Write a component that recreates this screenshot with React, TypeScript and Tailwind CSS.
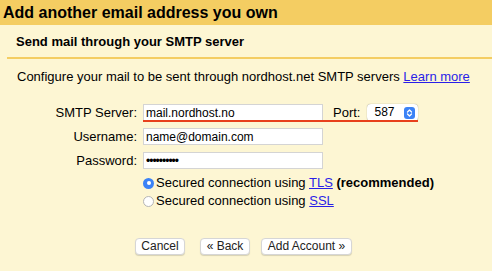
import React from "react";

const Radio: React.FC<{ checked?: boolean }> = ({ checked }) => {
  return checked ? (
    <span className="w-[11px] h-[11px] rounded-full bg-[#3b82f6] flex items-center justify-center shrink-0">
      <span className="w-[4px] h-[4px] rounded-full bg-white" />
    </span>
  ) : (
    <span className="w-[11px] h-[11px] rounded-full bg-white border border-[#b5b5b5] shrink-0" />
  );
};

const Button: React.FC<{ label: string; className: string }> = ({ label, className }) => {
  return (
    <button
      className={`h-[17px] bg-white rounded-[4px] border border-[#d6d6d6] shadow-[0_1px_1px_rgba(0,0,0,0.15)] text-[12px] leading-[15px] text-[#222] ${className}`}
    >
      {label}
    </button>
  );
};

const App: React.FC = () => {
  const inputClass =
    "h-[17px] w-[180px] bg-white border border-[#d4d4d4] px-[2px] text-[12px] leading-[15px] text-black outline-none";
  return (
    <div className="w-[492px] h-[271px] bg-[#fdf6d3] font-['Liberation_Sans',Arial,sans-serif] text-black overflow-hidden">
      <div className="h-[25px] bg-[#f4cd62] pl-[3px] text-[16px] leading-[25px] font-bold">
        Add another email address you own
      </div>
      <div className="mt-[9px] pl-[16px] text-[13px] leading-[15px] font-bold">
        Send mail through your SMTP server
      </div>
      <div className="mt-[8px] ml-[7px] h-[2px] bg-[#f4cd62]" />
      <div className="mt-[10px] pl-[17px] text-[13px] leading-[15px]">
        Configure your mail to be sent through nordhost.net SMTP servers{" "}
        <a className="text-[#2a1ee8] underline">Learn more</a>
      </div>

      <div className="mt-[20px] flex flex-col gap-[7px] text-[13px] leading-[17px]">
        <div className="flex items-center gap-[6px] h-[17px]">
          <div className="w-[137px] text-right">SMTP Server:</div>
          <div className="relative flex items-center">
            <input className={inputClass} defaultValue="mail.nordhost.no" />
            <span className="ml-[10px]">Port:</span>
            <div className="ml-[7px] h-[17px] w-[51px] bg-white rounded-[4px] shadow-[0_0_1px_rgba(0,0,0,0.5)] flex items-center justify-between pl-[7px] pr-[3px] text-[12px]">
              <span>587</span>
              <span className="w-[11px] h-[12px] rounded-[3px] bg-[#3b82f6] flex items-center justify-center">
                <svg width="7" height="10" viewBox="0 0 7 10" fill="none" stroke="white" strokeWidth="1.3" strokeLinecap="round" strokeLinejoin="round">
                  <path d="M1.5 4 L3.5 2 L5.5 4" />
                  <path d="M1.5 6 L3.5 8 L5.5 6" />
                </svg>
              </span>
            </div>
            <span className="absolute left-0 right-0 bottom-[-1px] h-[2px] bg-[#e8401c]" />
          </div>
        </div>
        <div className="flex items-center gap-[6px] h-[17px]">
          <div className="w-[137px] text-right">Username:</div>
          <input className={inputClass} defaultValue="name@domain.com" />
        </div>
        <div className="flex items-center gap-[6px] h-[17px]">
          <div className="w-[137px] text-right">Password:</div>
          <input className={`${inputClass} text-[10px] tracking-[-1px]`} type="password" defaultValue="abcdefghij" />
        </div>
      </div>

      <div className="mt-[5px] pl-[143px] flex flex-col text-[13px] leading-[18px]">
        <div className="flex items-center gap-[2px]">
          <Radio checked />
          <span>
            Secured connection using <a className="text-[#2a1ee8] underline">TLS</a>{" "}
            <b>(recommended)</b>
          </span>
        </div>
        <div className="flex items-center gap-[2px]">
          <Radio />
          <span>
            Secured connection using <a className="text-[#2a1ee8] underline">SSL</a>
          </span>
        </div>
      </div>

      <div className="mt-[28px] pl-[135px] flex items-start">
        <Button label="Cancel" className="w-[50px]" />
        <Button label="« Back" className="w-[50px] ml-[15px]" />
        <Button label="Add Account »" className="w-[91px] ml-[11px]" />
      </div>
    </div>
  );
};

export default App;
